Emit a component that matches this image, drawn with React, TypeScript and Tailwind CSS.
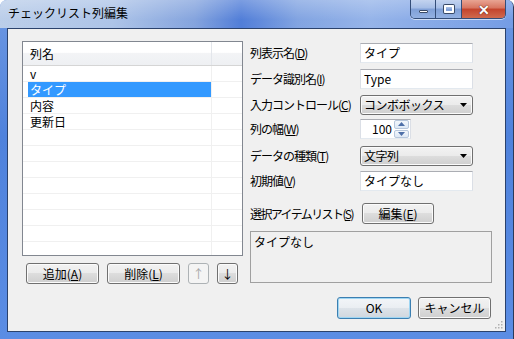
import React from "react";

const U = ({ c }: { c: string }) => <span className="underline underline-offset-[1px]">{c}</span>;

function Btn({
  children,
  className = "",
  variant = "normal",
}: {
  children: React.ReactNode;
  className?: string;
  variant?: "normal" | "default" | "disabled";
}) {
  const v =
    variant === "disabled"
      ? "border-[#adb2b5] bg-[#f4f4f4] text-[#a6a6a6]"
      : variant === "default"
      ? "border-[#3c7fb1] bg-[linear-gradient(180deg,#f2f5f8_0%,#eaeef2_49%,#dde3e9_50%,#d0d7de_100%)] shadow-[inset_0_0_0_1px_#9fd6f3] text-black"
      : "border-[#707070] bg-[linear-gradient(180deg,#f2f2f2_0%,#ebebeb_49%,#dddddd_50%,#cfcfcf_100%)] shadow-[inset_0_0_0_1px_#fbfbfb] text-black";
  return (
    <div className={`flex items-center justify-center whitespace-nowrap rounded-[3px] border text-[12px] leading-none ${v} ${className}`}>
      {children}
    </div>
  );
}

function Input({ value, className = "" }: { value: string; className?: string }) {
  return (
    <div className={`flex h-[20px] w-[113px] items-center border border-[#abadb3] border-b-[#e3e9ef] border-x-[#dbdfe6] bg-white pl-[3px] text-[12px] leading-none ${className}`}>
      {value}
    </div>
  );
}

function Combo({ value }: { value: string }) {
  return (
    <div className="flex h-[20px] w-[113px] items-center justify-between rounded-[3px] border border-[#707070] bg-[linear-gradient(180deg,#f2f2f2_0%,#ebebeb_49%,#dddddd_50%,#cfcfcf_100%)] pl-[3px] pr-[4px] text-[12px] leading-none shadow-[inset_0_0_0_1px_#fbfbfb]">
      <span className="tracking-[-0.5px]">{value}</span>
      <svg width="8" height="5" viewBox="0 0 8 5">
        <path d="M0 0 H7 L3.5 4 Z" fill="#000" />
      </svg>
    </div>
  );
}

function Row({ label, children, className = "" }: { label: React.ReactNode; children: React.ReactNode; className?: string }) {
  return (
    <div className={`flex h-[20px] items-center ${className}`}>
      <div className="w-[110px] whitespace-nowrap text-[12px] leading-none tracking-[-1px]">{label}</div>
      {children}
    </div>
  );
}

export default function App() {
  const rows = ["v", "タイプ", "内容", "更新日"];
  const empties = Array.from({ length: 7 });
  return (
    <div className="flex h-[339px] w-[514px] flex-col overflow-hidden rounded-t-[7px] border-r border-[#2a3a58] bg-[linear-gradient(180deg,#6d98e2_0%,#4f82dc_40%,#5b8de4_100%)] font-['Noto_Sans_CJK_JP',sans-serif] text-black">
      {/* title bar */}
      <div className="relative flex h-[28px] shrink-0 items-start bg-[linear-gradient(180deg,rgba(255,255,255,0.28)_0%,rgba(255,255,255,0.05)_70%),linear-gradient(90deg,#b7cbe8_0%,#a9c1e7_22%,#7e9fdc_38%,#4877d6_47%,#7b9fe0_58%,#90b0e8_72%,#6d97e4_100%)]">
        <div className="pl-[8px] pt-[6px] text-[12px] leading-[14px] text-black">チェックリスト列編集</div>
        <div className="ml-auto mr-[7px] flex h-[19px] overflow-hidden rounded-b-[5px] border border-t-0 border-[#344d78] shadow-[0_1px_0_rgba(255,255,255,0.6)]">
          <div className="flex w-[25px] items-center justify-center border-r border-[#344d78] bg-[linear-gradient(180deg,#c3d3ef_0%,#a5bde6_45%,#7f9fd6_50%,#93b1e3_100%)]">
            <div className="mt-[4px] h-[3px] w-[9px] rounded-[1px] border border-[#3a4a66] bg-white" />
          </div>
          <div className="flex w-[26px] items-center justify-center border-r border-[#344d78] bg-[linear-gradient(180deg,#c3d3ef_0%,#a5bde6_45%,#7f9fd6_50%,#93b1e3_100%)]">
            <div className="h-[8px] w-[10px] rounded-[1px] border-2 border-white shadow-[0_0_0_1px_#3a4a66]" />
          </div>
          <div className="flex w-[43px] items-center justify-center bg-[linear-gradient(180deg,#e8a493_0%,#d7745f_45%,#c4432c_50%,#d06a4e_100%)]">
            <span className="text-[14px] font-bold leading-none text-white [text-shadow:0_0_1px_#5a1a10,0_0_1px_#5a1a10]">✕</span>
          </div>
        </div>
      </div>
      {/* frame + client */}
      <div className="flex flex-1 px-[7px] pb-[7px]">
        <div className="relative flex flex-1 border border-[#2b426c] bg-[#f0f0f0]">
          <div className="flex pl-[14px] pt-[12px]">
            {/* left column */}
            <div className="flex w-[221px] flex-col">
              <div className="flex h-[215px] flex-col overflow-hidden border border-[#828790] bg-white">
                <div className="flex h-[24px] shrink-0 border-b border-[#d5d5d5] bg-[linear-gradient(180deg,#ffffff_0%,#ffffff_45%,#f3f4f6_50%,#eef0f3_100%)]">
                  <div className="flex w-[189px] items-center border-r border-[#e3e6eb] pl-[7px] text-[12px] leading-none">列名</div>
                  <div className="flex-1" />
                </div>
                {rows.map((r, i) => (
                  <div key={i} className="flex h-[16px] shrink-0 border-b border-[#f0f0f0]">
                    <div className="w-[189px] border-r border-[#f0f0f0] pl-[5px]">
                      <div className={`flex h-full items-center pl-[2px] text-[12px] leading-none ${i === 1 ? "bg-[#3399ff] text-white" : ""}`}>{r}</div>
                    </div>
                    <div className="flex-1" />
                  </div>
                ))}
                {empties.map((_, i) => (
                  <div key={i} className="flex h-[16px] shrink-0 border-b border-[#f0f0f0]">
                    <div className="w-[189px] border-r border-[#f0f0f0]" />
                    <div className="flex-1" />
                  </div>
                ))}
                <div className="flex flex-1">
                  <div className="w-[189px] border-r border-[#f0f0f0]" />
                </div>
              </div>
              <div className="mt-[7px] flex gap-[8px] pl-[4px]">
                <Btn className="h-[21px] w-[73px]">
                  追加(<U c="A" />)
                </Btn>
                <Btn className="h-[21px] w-[73px]">
                  削除(<U c="L" />)
                </Btn>
                <Btn className="h-[21px] w-[21px]" variant="disabled">
                  ↑
                </Btn>
                <Btn className="h-[21px] w-[21px]">↓</Btn>
              </div>
            </div>
            {/* right column */}
            <div className="ml-[7px] flex w-[241px] flex-col pt-[2px]">
              <Row label={<>列表示名(<U c="D" />)</>}>
                <Input value="タイプ" />
              </Row>
              <Row className="mt-[6px]" label={<>データ識別名(<U c="I" />)</>}>
                <Input value="Type" />
              </Row>
              <Row className="mt-[6px]" label={<>入力コントロール(<U c="C" />)</>}>
                <Combo value="コンボボックス" />
              </Row>
              <Row className="mt-[4px]" label={<>列の幅(<U c="W" />)</>}>
                <div className="flex h-[20px] w-[51px] items-center border border-[#abadb3] border-b-[#e3e9ef] border-x-[#dbdfe6] bg-white">
                  <div className="flex-1 pr-[2px] text-right text-[12px] leading-none">100</div>
                  <div className="flex h-[18px] w-[16px] flex-col gap-[1px] pr-[1px]">
                    <div className="flex flex-1 items-center justify-center rounded-[2px] border border-[#b7c7dc] bg-[linear-gradient(180deg,#f3f7fc_0%,#dde8f5_100%)]">
                      <svg width="7" height="4" viewBox="0 0 7 4"><path d="M3.5 0 L7 4 H0 Z" fill="#4d6fa8" /></svg>
                    </div>
                    <div className="flex flex-1 items-center justify-center rounded-[2px] border border-[#b7c7dc] bg-[linear-gradient(180deg,#f3f7fc_0%,#dde8f5_100%)]">
                      <svg width="7" height="4" viewBox="0 0 7 4"><path d="M0 0 H7 L3.5 4 Z" fill="#4d6fa8" /></svg>
                    </div>
                  </div>
                </div>
              </Row>
              <Row className="mt-[7px]" label={<>データの種類(<U c="T" />)</>}>
                <Combo value="文字列" />
              </Row>
              <Row className="mt-[5px]" label={<>初期値(<U c="V" />)</>}>
                <Input value="タイプなし" />
              </Row>
              <div className="mt-[12px] flex h-[21px] items-center">
                <div className="w-[112px] whitespace-nowrap text-[12px] leading-none tracking-[-1.6px]">
                  選択アイテムリスト(<U c="S" />)
                </div>
                <Btn className="h-[21px] w-[72px]">
                  編集(<U c="E" />)
                </Btn>
              </div>
              <div className="mt-[7px] h-[52px] w-[242px] border border-[#a0a0a0] bg-[#f0f0f0] pl-[3px] pt-[3px] text-[12px] leading-[14px]">
                タイプなし
              </div>
              <div className="mt-[14px] flex justify-end gap-[7px] pr-[0px]">
                <Btn className="h-[22px] w-[74px]" variant="default">OK</Btn>
                <Btn className="h-[22px] w-[73px]">キャンセル</Btn>
              </div>
            </div>
          </div>
          {/* size grip */}
          <svg className="absolute bottom-[2px] right-[2px]" width="10" height="10" viewBox="0 0 10 10">
            {[
              [8, 2],
              [5, 5],
              [8, 5],
              [2, 8],
              [5, 8],
              [8, 8],
            ].map(([x, y], i) => (
              <rect key={i} x={x} y={y} width="1.5" height="1.5" fill="#b0b0b0" />
            ))}
          </svg>
        </div>
      </div>
    </div>
  );
}
